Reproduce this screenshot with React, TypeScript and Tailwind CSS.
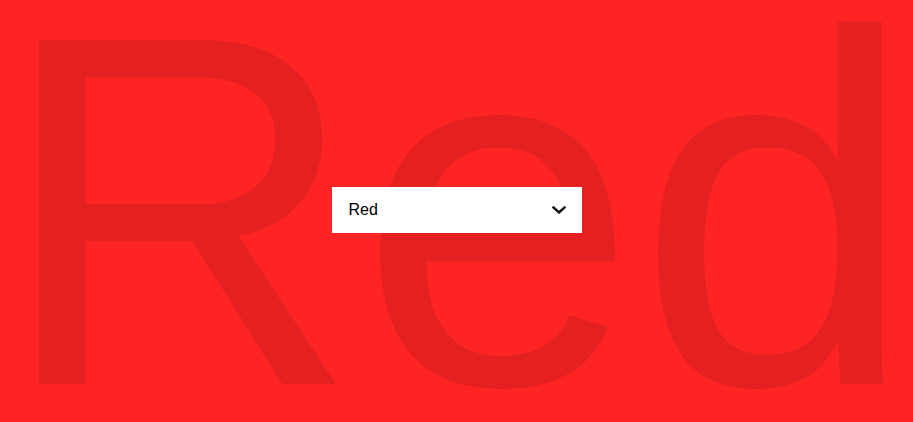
import { useState } from 'react';

const COLORS = ['Red', 'Green', 'Blue', 'Yellow'];

export default function App() {
  const [color, setColor] = useState('Red');

  return (
    <div className="relative flex h-screen w-full items-center justify-center overflow-hidden bg-[#ff2424] font-['Liberation_Sans',Arial,sans-serif]">
      {/* giant backdrop word */}
      <div className="pointer-events-none absolute inset-0 flex items-center justify-center">
        <span className="whitespace-nowrap text-[500px] leading-none text-[#e42020] select-none">
          {color}
        </span>
      </div>

      <div className="relative mb-[2px] h-[46px] w-[250px] bg-white">
        <select
          value={color}
          onChange={(e) => setColor(e.target.value)}
          className="h-full w-full cursor-pointer appearance-none border-0 bg-transparent pl-[17px] pr-10 text-[16px] text-black outline-none"
        >
          {COLORS.map((c) => (
            <option key={c} value={c}>
              {c}
            </option>
          ))}
        </select>
        <svg
          className="pointer-events-none absolute right-[16px] top-1/2 -translate-y-1/2"
          width="14"
          height="8"
          viewBox="0 0 14 8"
          fill="none"
        >
          <path d="M1.5 1.5 7 6.5l5.5-5" stroke="#111" strokeWidth="2.4" strokeLinecap="square" />
        </svg>
      </div>
    </div>
  );
}
